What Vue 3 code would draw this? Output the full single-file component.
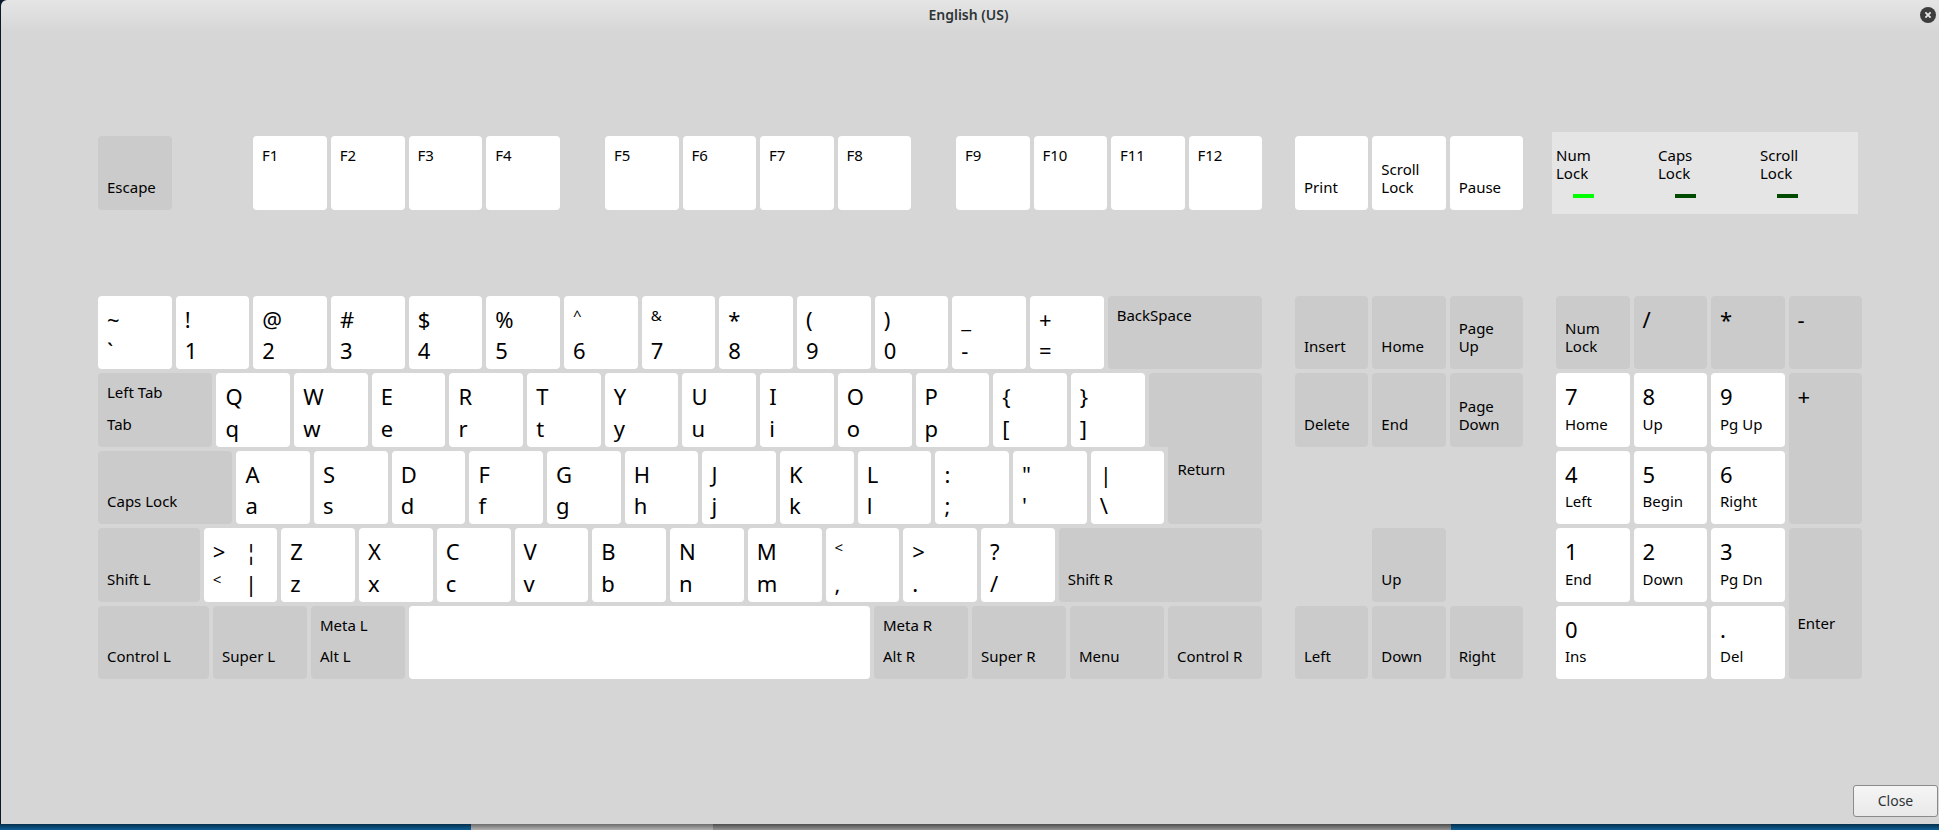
<script setup>
const k = (top, bottom, w = 74, kind = 'key--char') => ({ top, bottom, w, kind })
const small = (s) => [s, true]

const mod = (bottom, w = 74, top = '') => ({
  top: top ? small(top) : null,
  bottom: bottom ? small(bottom) : null,
  w,
  kind: 'key--mod',
})
const chars = (upper, lower) =>
  [...upper].map((c, i) => k([c, '&<^'.includes(c)], [lower[i], false]))
const fn = (s) => k(small(s), null)

const functionGroups = [
  ['F1', 'F2', 'F3', 'F4'].map(fn),
  ['F5', 'F6', 'F7', 'F8'].map(fn),
  ['F9', 'F10', 'F11', 'F12'].map(fn),
]
const systemKeys = ['Print', 'Scroll\nLock', 'Pause'].map((s) => k(null, small(s)))

const leds = [
  { name: 'Num\nLock', on: true },
  { name: 'Caps\nLock', on: false },
  { name: 'Scroll\nLock', on: false },
]

const mainRows = [
  [...chars('~!@#$%^&*()_+', '`1234567890-='), mod('', 155, 'BackSpace')],
  [
    mod('Tab', 115, 'Left Tab'),
    ...chars('QWERTYUIOP{}', 'qwertyuiop[]'),
    { ...mod('', 114), kind: 'key--mod key--return-top', part: true },
  ],
  [
    mod('Caps Lock', 135),
    ...chars('ASDFGHJKL:"|', "asdfghjkl;'\\"),
    { ...mod('', 94, 'Return'), kind: 'key--mod key--return' },
  ],
  [
    mod('Shift L', 102),
    { ...k(['>', false], small('<')), kind: 'key--char key--quad', alt: ['¦', '|'] },
    ...chars('ZXCVBNM<>?', 'zxcvbnm,./'),
    mod('Shift R', 204),
  ],
  [
    mod('Control L', 111),
    mod('Super L', 94),
    mod('Alt L', 94, 'Meta L'),
    k(null, null, 461),
    mod('Alt R', 94, 'Meta R'),
    mod('Super R', 94),
    mod('Menu', 94),
    mod('Control R', 94),
  ],
]
const columns = (keys) => keys.map((key) => `minmax(0, ${key.w}fr)`).join(' ')

const navKeys = [
  mod('Insert'), mod('Home'), mod('Page\nUp'),
  mod('Delete'), mod('End'), mod('Page\nDown'),
  null, null, null,
  null, mod('Up'), null,
  mod('Left'), mod('Down'), mod('Right'),
]

const op = (c, extra = '') => ({ top: [c, false], bottom: null, kind: 'key--mod ' + extra })
const num = (d, s, extra = '') => ({ top: [d, false], bottom: small(s), kind: 'key--char ' + extra })
const padKeys = [
  mod('Num\nLock'), op('/'), op('*'), op('-'),
  num('7', 'Home'), num('8', 'Up'), num('9', 'Pg Up'), op('+', 'key--tall'),
  num('4', 'Left'), num('5', 'Begin'), num('6', 'Right'),
  num('1', 'End'), num('2', 'Down'), num('3', 'Pg Dn'),
  { ...mod('', 74, 'Enter'), kind: 'key--mod key--tall key--enter' },
  num('0', 'Ins', 'key--wide'), num('.', 'Del'),
]
</script>

<template>
  <div class="desktop">
    <main class="window">
      <header class="titlebar">
        <h1 class="title">English (US)</h1>
        <button class="close-icon" type="button" aria-label="Close window">
          <svg width="16" height="16" viewBox="0 0 16 16">
            <circle cx="8" cy="8" r="8" fill="#3d3d3d" />
            <path d="M5.4 5.4l5.2 5.2M10.6 5.4l-5.2 5.2" stroke="#e8e8e8" stroke-width="1.8" />
          </svg>
        </button>
      </header>

      <section class="keyboard" aria-label="Keyboard layout">
        <div class="row row--function">
          <div class="function-keys">
            <button class="key key--mod" type="button">
              <span class="slot slot--bottom small">Escape</span>
            </button>
            <div v-for="(group, g) in functionGroups" :key="g" class="group">
              <button v-for="key in group" :key="key.top[0]" class="key" :class="key.kind" type="button">
                <span class="slot small">{{ key.top[0] }}</span>
              </button>
            </div>
          </div>
          <div class="block block--nav block--single">
            <button v-for="key in systemKeys" :key="key.bottom[0]" class="key" :class="key.kind" type="button">
              <span class="slot slot--bottom small">{{ key.bottom[0] }}</span>
            </button>
          </div>
          <div class="indicators">
            <div v-for="led in leds" :key="led.name" class="indicator">
              <span class="small">{{ led.name }}</span>
              <i class="led" :class="{ 'led--on': led.on }"></i>
            </div>
          </div>
        </div>

        <div class="row row--main">
          <div class="block">
            <div v-for="(keys, r) in mainRows" :key="r" class="keys" :style="{ gridTemplateColumns: columns(keys) }">
              <component
                :is="key.part ? 'span' : 'button'"
                v-for="(key, i) in keys"
                :key="i"
                class="key"
                :class="key.kind"
                :type="key.part ? null : 'button'"
                :aria-label="key.top || key.bottom || key.part ? null : 'Space'"
              >
                <span v-if="key.top" class="slot" :class="key.top[1] ? 'small' : 'big'">{{ key.top[0] }}</span>
                <span v-if="key.alt" class="slot big">{{ key.alt[0] }}</span>
                <span v-if="key.bottom" class="slot slot--bottom" :class="key.bottom[1] ? 'small' : 'big'">{{ key.bottom[0] }}</span>
                <span v-if="key.alt" class="slot slot--bottom big">{{ key.alt[1] }}</span>
              </component>
            </div>
          </div>

          <div class="block block--nav">
            <template v-for="(key, i) in navKeys" :key="i">
              <button v-if="key" class="key" :class="key.kind" type="button">
                <span class="slot slot--bottom small">{{ key.bottom[0] }}</span>
              </button>
              <span v-else></span>
            </template>
          </div>

          <div class="block block--pad">
            <button v-for="(key, i) in padKeys" :key="i" class="key" :class="key.kind" type="button">
              <span v-if="key.top" class="slot" :class="key.top[1] ? 'small' : 'big'">{{ key.top[0] }}</span>
              <span v-if="key.bottom" class="slot slot--bottom small">{{ key.bottom[0] }}</span>
            </button>
          </div>
        </div>
      </section>

      <footer class="actions">
        <button class="close" type="button">Close</button>
      </footer>
    </main>
    <div class="wallpaper"><i class="pane pane--light"></i><i class="pane pane--dark"></i></div>
  </div>
</template>

<style>
body {
  background: #0b1a2a;
}
</style>

<style scoped>
.desktop {
  display: flex;
  flex-direction: column;
  min-height: 100vh;
  background: #0b1a2a;
  font-family: "Noto Sans", "Open Sans", sans-serif;
  color: #000;
}
.window {
  flex: 1;
  display: flex;
  flex-direction: column;
  margin-left: 1px;
  border-radius: 6px 0 0 0;
  background: linear-gradient(#e5e5e5, #d6d6d6 32px);
}
.titlebar {
  display: grid;
  grid-template-columns: 1fr auto 1fr;
  align-items: center;
  height: 30px;
  padding-right: 3px;
}
.title {
  grid-column: 2;
  margin: 0;
  font-size: 14px;
  line-height: 20px;
  font-weight: 600;
  color: #2e3436;
}
.close-icon {
  justify-self: end;
  display: flex;
  padding: 0;
  border: 0;
  background: none;
}
.keyboard {
  flex: 1;
  display: flex;
  flex-direction: column;
  justify-content: center;
  gap: 86px;
  padding: 0 77px 0 97px;
}
.row {
  display: grid;
  grid-template-columns: 1164fr 228fr 306fr;
  column-gap: 33px;
}
.row--function {
  height: 74px;
}
.row--main {
  aspect-ratio: 1764 / 384;
}
.function-keys {
  display: grid;
  grid-template-columns: 74fr 81fr 307fr 45fr 306fr 45fr 306fr;
}
.group {
  display: grid;
  grid-template-columns: repeat(4, minmax(0, 1fr));
  gap: 4px;
}
.group:nth-child(2) {
  grid-column: 3;
}
.group:nth-child(3) {
  grid-column: 5;
}
.group:nth-child(4) {
  grid-column: 7;
}
.keys {
  display: grid;
  gap: 4px;
  min-height: 0;
}
.block {
  display: grid;
  grid-template-rows: repeat(5, minmax(0, 1fr));
  gap: 4px;
}
.block--single {
  grid-template-rows: 1fr;
}
.block--nav {
  grid-template-columns: repeat(3, minmax(0, 1fr));
}
.block--pad {
  grid-template-columns: repeat(4, minmax(0, 1fr));
}
.key {
  box-sizing: border-box;
  position: relative;
  display: grid;
  grid-template-rows: auto 1fr;
  justify-items: start;
  min-width: 0;
  min-height: 0;
  padding: 10px 0 6px 9px;
  border: 0;
  border-radius: 4px;
  font: inherit;
  color: inherit;
  text-align: left;
}
.key--char {
  background: #fff;
}
.key--mod {
  background: #cbcbcb;
}
.key--quad {
  grid-template-columns: 1fr 1fr;
}
.key--tall {
  grid-row: span 2;
}
.key--wide {
  grid-column: span 2;
}
.key--enter {
  padding-top: 86px;
}
.key--return-top {
  border-bottom-right-radius: 0;
}
.key--return {
  border-top-left-radius: 0;
  border-top-right-radius: 0;
}
.key--return::before {
  content: "";
  position: absolute;
  inset: -5px 0 auto 0;
  height: 6px;
  background: inherit;
}
.slot {
  display: block;
}
.slot--bottom {
  grid-row: 2;
  align-self: end;
}
.small {
  font-size: 15px;
  line-height: 18px;
  white-space: pre-line;
}
.slot--bottom.small {
  margin-bottom: 8px;
}
.key--return .small {
  line-height: 16px;
}
.big {
  font-size: 22px;
  line-height: 26px;
}
.indicators {
  display: grid;
  grid-template-columns: repeat(3, 1fr);
  margin: -4px 4px -4px -4px;
  background: #e5e5e5;
}
.indicator {
  display: flex;
  flex-direction: column;
  gap: 12px;
  padding: 14px 0 0 4px;
}
.led {
  width: 21px;
  height: 4px;
  margin-left: 17px;
  background: #004b00;
}
.led--on {
  background: #00ff00;
}
.actions {
  display: flex;
  justify-content: flex-end;
  padding: 0 1px 7px 0;
}
.close {
  width: 85px;
  height: 32px;
  border: 1px solid #8b8b8b;
  border-radius: 3px;
  background: linear-gradient(#f5f5f5, #e9e9e9);
  font: inherit;
  font-size: 14px;
  line-height: 18px;
  color: #2e3436;
}
.wallpaper {
  display: grid;
  grid-template-columns: 471fr 242fr 738fr 488fr;
  height: 6px;
  background: linear-gradient(#06304c, #0f5f96);
}
.pane--light {
  grid-column: 2;
  background: linear-gradient(#6c6c6c, #b2b2b2);
}
.pane--dark {
  background: linear-gradient(#4e4e4e, #949494);
}
</style>
